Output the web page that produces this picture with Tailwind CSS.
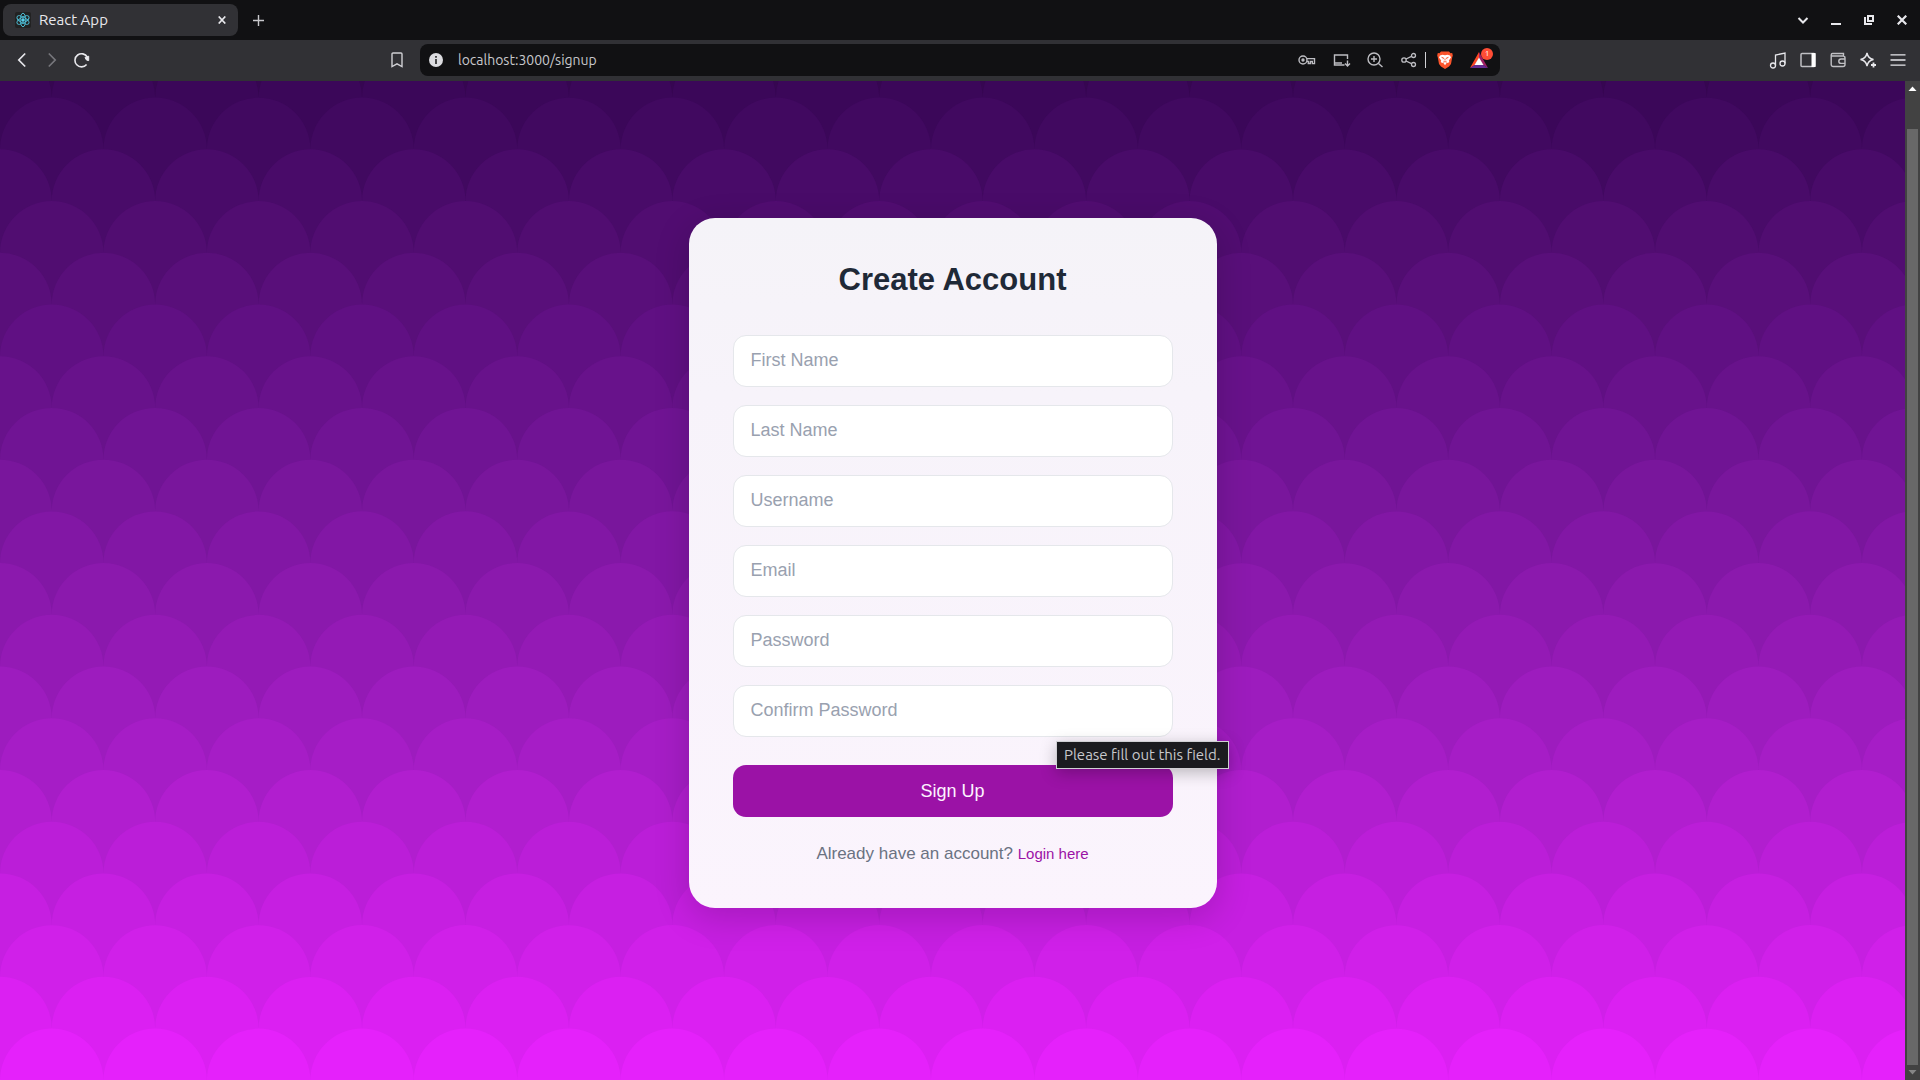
<!DOCTYPE html>
<html lang="en">
<head>
<meta charset="utf-8">
<title>React App</title>
<script src="https://cdn.jsdelivr.net/npm/@tailwindcss/browser@4"></script>
</head>
<body class="flex h-screen flex-col overflow-hidden bg-[#111113] font-['Ubuntu','Noto_Sans',sans-serif]">
<header class="shrink-0 text-[#e8e8ec]">
  <div class="flex h-10 items-center justify-between pr-[10px]">
    <div class="flex items-center">
      <div class="ml-[3px] flex h-8 w-[235px] items-center rounded-lg bg-[#313135] pr-2 pl-3">
        <svg class="size-4 rounded-xs bg-[#222]" viewBox="-13 -13 26 26" fill="none" stroke="#4fc3dc" stroke-width="1.5"><ellipse ry="11" rx="4.5"/><ellipse ry="11" rx="4.5" transform="rotate(60)"/><ellipse ry="11" rx="4.5" transform="rotate(120)"/><circle r="2.2" fill="#61dafb"/></svg>
        <span class="ml-2 flex-1 text-[15px]">React App</span>
        <button aria-label="Close tab" class="grid size-4 place-items-center"><svg class="size-2" viewBox="0 0 8 8" stroke="currentColor" stroke-width="1.7"><path d="M.7.5l6.600 7M7.300.5l-6.600 7"/></svg></button>
      </div>
      <button aria-label="New tab" class="ml-3 grid size-4 place-items-center"><svg class="size-[11px]" viewBox="0 0 11 11" stroke="#c8c8cc" stroke-width="1.4"><path d="M5.500 0v11M0 5.500h11"/></svg></button>
    </div>
    <div class="flex items-center gap-[17px]">
      <button aria-label="Search tabs" class="grid size-4 place-items-center"><svg class="size-3" viewBox="0 0 12 12" fill="none" stroke="currentColor" stroke-width="2"><path d="M1.500 4L6 8.500L10.500 4"/></svg></button>
      <button aria-label="Minimize" class="grid size-4 place-items-center"><svg class="size-[10px]" viewBox="0 0 10 10" fill="currentColor"><path d="M0 8h10v2H0z"/></svg></button>
      <button aria-label="Restore" class="grid size-4 place-items-center"><svg class="size-[10px]" viewBox="0 0 10 10" fill="none" stroke="currentColor" stroke-width="2"><path d="M4 1h5v5H4zM1 2v7h7"/></svg></button>
      <button aria-label="Close" class="grid size-4 place-items-center"><svg class="size-[10px]" viewBox="0 0 10 10" stroke="currentColor" stroke-width="2.2"><path d="M.7.7l8.600 8.600M9.300.7L.7 9.300"/></svg></button>
    </div>
  </div>
  <div class="grid h-[41px] grid-cols-[1fr_minmax(0,1080px)_1fr] items-center bg-[#313135] pb-px">
    <div class="flex items-center justify-between pr-[13px] pl-[10px]">
      <div class="flex items-center gap-2">
        <button aria-label="Back" class="grid size-6 place-items-center"><svg class="h-4 w-3" viewBox="0 0 12 16" fill="none" stroke="currentColor" stroke-width="1.7"><path d="M9.200 1.500L2.800 8l6.400 6.500"/></svg></button>
        <button aria-label="Forward" class="grid size-5 place-items-center text-[#77777c]"><svg class="h-4 w-3" viewBox="0 0 12 16" fill="none" stroke="currentColor" stroke-width="1.7"><path d="M2.800 1.500L9.200 8l-6.400 6.500"/></svg></button>
        <button aria-label="Reload" class="grid size-6 place-items-center"><svg class="size-4" viewBox="0 0 16 16" fill="none" stroke="currentColor" stroke-width="1.6"><path d="M12.600 12.600A6.600 6.600 0 1 1 13.300 5"/><path d="M11 5.500l3.700-1.300v4.400q-2.500.5-3.700-3.100z" fill="currentColor" stroke-width="1"/></svg></button>
      </div>
      <button aria-label="Bookmark" class="grid size-5 place-items-center"><svg class="h-4 w-3" viewBox="0 0 12 16" fill="none" stroke="#d0d0d4" stroke-width="1.4"><path d="M1 2a1 1 0 0 1 1-1h8a1 1 0 0 1 1 1v12.500L6 11.800 1 14.500z"/></svg></button>
    </div>
    <div class="flex h-8 items-center rounded-lg bg-[#111113] pr-[7px] pl-2">
      <svg class="h-[14px] w-4" viewBox="0 0 16 14"><circle cx="8" cy="7" r="7" fill="#dcdce0"/><path d="M7.200 3h1.600v1.700H7.200zM7.200 6h1.600v5H7.200z" fill="#222"/></svg>
      <input aria-label="Address" value="localhost:3000/signup" class="ml-[14px] min-w-0 flex-1 bg-transparent text-sm text-[#c8c8cc] outline-none">
      <div class="flex items-center gap-[14px] text-[#bdbdc2]">
        <svg class="h-4 w-5" viewBox="0 0 20 16" fill="none" stroke="currentColor" stroke-width="1.400"><circle cx="6" cy="8" r="4"/><circle cx="6" cy="8" r="1" fill="currentColor"/><path d="M9.700 6.600H17.500v5h-2.200V9.500h-2v2h-2V9.400H9.800"/></svg>
        <svg class="h-4 w-5" viewBox="0 0 20 16" fill="none" stroke="currentColor" stroke-width="1.400"><path d="M16.500 7V3h-13v10h10M4 11h7M16.500 8.500v5M14 11.500l2.500 2.500 2.500-2.500"/></svg>
        <svg class="size-5" viewBox="0 0 20 20" fill="none" stroke="currentColor" stroke-width="1.400"><circle cx="9" cy="9" r="6"/><path d="M9 6v6M6 9h6M13.500 13.500L17.500 17"/></svg>
        <svg class="h-4 w-5" viewBox="0 0 20 16" fill="none" stroke="currentColor" stroke-width="1.300"><circle cx="5" cy="8" r="2.200"/><circle cx="14.500" cy="3.500" r="2"/><circle cx="14.500" cy="12.500" r="2"/><path d="M7 7l5.500-2.700M7 9l5.500 2.700"/></svg>
      </div>
      <div class="ml-[6px] h-4 w-px bg-[#d0d0d4]"></div>
      <svg class="ml-[11px] h-[18px] w-4" viewBox="0 0 16 18"><path d="M4 .5h8l1.500 1.700 1.700-.2.600 2.500-.6 2L14 13l-2 2.500L8 18l-4-2.500L2 13 .8 6.500l-.6-2L.8 2l1.700.2z" fill="#fb542b"/><path d="M3 4.500l2.500-.8L8 4.300l2.500-.6 2.500.8 1 2-2.200 3 .5 1.500-1.500 1-1.600-.8L8 13l-1.200-1.800-1.600.8-1.500-1 .5-1.500L2 6.500z" fill="#fff"/><path d="M6.200 11.800L8 11l1.800.8L8 14.300z" fill="#fff"/><path d="M4.500 6.300l2 .6-.5 1.300M11.500 6.300l-2 .6.5 1.300M8 7.500v2M6.500 10.300L8 11l1.500-.7" stroke="#fb542b" stroke-width=".9" fill="none"/></svg>
      <button aria-label="Rewards, 1 notification" class="relative ml-4 h-6 w-6"><svg class="h-6 w-[22px]" viewBox="0 0 22 24"><path d="M10 4L1 20l5-3 4-7z" fill="#ff4724"/><path d="M10 4l9 16-5-3-4-7z" fill="#9e1f63"/><path d="M1 20h18l-4.500-3h-9z" fill="#662d91"/><path d="M10 9.500l4.500 7.500h-9z" fill="#fff"/></svg><span class="absolute top-0 right-0 grid size-3 place-items-center rounded-full bg-[#ff4d35] text-[8px] leading-none text-white">1</span></button>
    </div>
    <div class="flex items-center justify-end gap-[10px] pr-3">
      <svg class="size-5" viewBox="0 0 20 20" fill="none" stroke="currentColor" stroke-width="1.300"><circle cx="5" cy="15.500" r="2.500"/><circle cx="14.500" cy="13.500" r="2.500"/><path d="M7.500 15.500V5L17 3v10.500"/></svg>
      <svg class="size-5" viewBox="0 0 20 20" fill="none" stroke="#c0c0c4" stroke-width="1.500"><rect x="3" y="3.500" width="14" height="13" rx="1"/><path d="M13.500 3h4v14h-4z" fill="#fff" stroke="none"/></svg>
      <svg class="size-5" viewBox="0 0 20 20" fill="none" stroke="#c0c0c4" stroke-width="1.400"><path d="M3.200 5v9.500a2 2 0 0 0 2 2H15a2 2 0 0 0 2-2V8a2 2 0 0 0-2-2H4.500a1 1 0 0 1 0-2.500H15.500V6M17 9h-4a2.200 2.200 0 0 0 0 4.400h4"/></svg>
      <svg class="size-5" viewBox="0 0 20 20" fill="none" stroke="currentColor" stroke-width="1.400"><path d="M9 3q1 5.500 6.500 6.500Q10 10.500 9 16 8 10.500 2.500 9.500 8 8.500 9 3z"/><path d="M15.500 12.500v5M13 15h5" stroke-width="1.800"/></svg>
      <button aria-label="Menu" class="grid size-5 place-items-center"><svg class="h-3 w-4" viewBox="0 0 16 12" stroke="currentColor" stroke-width="1.300"><path d="M.5.8h15M.5 6h15M.5 11.200h15"/></svg></button>
    </div>
  </div>
</header>

<div class="flex min-h-0 flex-1">
  <main class="relative flex min-w-0 flex-1 items-start justify-center overflow-hidden bg-[#360651] pt-[137px] font-['Liberation_Sans',sans-serif]">
    <svg id="scales" class="absolute inset-0 h-full w-full" aria-hidden="true"></svg>
    <form class="relative flex w-[528px] flex-col rounded-[26px] bg-linear-to-b from-[#f5f3f8] via-[#f7f3fa] via-25% to-[#fbf4fd] px-11 py-[41px] shadow-[0_9px_35px_rgba(0,0,0,0.17)]">
      <h1 class="mb-[34px] text-center text-[31px] leading-[42px] font-bold text-[#1f2937]">Create Account</h1>
      <div class="flex flex-col gap-[18px] text-[18px]">
        <input aria-label="First Name" placeholder="First Name" required class="h-[52px] rounded-[13px] border border-gray-200 bg-white px-[17px] pb-px placeholder:text-gray-400">
        <input aria-label="Last Name" placeholder="Last Name" required class="h-[52px] rounded-[13px] border border-gray-200 bg-white px-[17px] pb-px placeholder:text-gray-400">
        <input aria-label="Username" placeholder="Username" required class="h-[52px] rounded-[13px] border border-gray-200 bg-white px-[17px] pb-px placeholder:text-gray-400">
        <input aria-label="Email" type="email" placeholder="Email" required class="h-[52px] rounded-[13px] border border-gray-200 bg-white px-[17px] pb-px placeholder:text-gray-400">
        <input aria-label="Password" type="password" placeholder="Password" required class="h-[52px] rounded-[13px] border border-gray-200 bg-white px-[17px] pb-px placeholder:text-gray-400">
        <div class="relative flex flex-col">
          <input aria-label="Confirm Password" type="password" placeholder="Confirm Password" required class="h-[52px] rounded-[13px] border border-gray-200 bg-white px-[17px] pb-px placeholder:text-gray-400">
          <div role="tooltip" class="absolute top-full -right-14 z-10 mt-1 flex h-7 items-center border border-[#d0d0d4] bg-[#1b1b1f] px-[7px] font-['Ubuntu','Noto_Sans',sans-serif] text-[15px] whitespace-nowrap text-[#c8c8cc] shadow-[0_4px_16px_rgba(0,0,0,0.25)]">Please fill out this field.</div>
        </div>
      </div>
      <button type="submit" class="mt-7 h-[52px] rounded-[13px] bg-[#9b12a6] text-[18px] text-[#fdf4ff]">Sign Up</button>
      <p class="mt-[23px] text-center text-[17px] leading-[27px] text-gray-500">Already have an account? <a href="/login" class="text-[15px] text-[#9b12a6]">Login here</a></p>
    </form>
  </main>
  <div class="flex w-[15px] flex-col items-center bg-[#424242]" aria-hidden="true">
    <svg class="h-12 w-[15px] shrink-0" viewBox="0 0 15 48"><path d="M7.500 5.500l4 4.500h-8z" fill="#fff"/></svg>
    <div class="w-[11px] flex-1 bg-[#686868]"></div>
    <svg class="h-[15px] w-[15px] shrink-0" viewBox="0 0 15 15"><path d="M3.500 5h8l-4 4.500z" fill="#868686"/></svg>
  </div>
</div>
<script>
  // Overlapping scales: each row is half a scale lower, lighter and shifted sideways.
  const svg = document.getElementById('scales');
  const stops = [[-1, 59, 7, 89], [0, 65, 9, 96], [6, 112, 20, 148], [12, 166, 29, 198], [18, 229, 33, 251]];
  const colour = (row) => {
    const i = Math.max(1, stops.findIndex((s) => s[0] >= row));
    const [a, b] = [stops[i - 1], stops[i]];
    const t = (row - a[0]) / (b[0] - a[0]);
    return 'rgb(' + [1, 2, 3].map((k) => Math.round(a[k] + (b[k] - a[k]) * t)).join() + ')';
  };
  const r = 51.72;
  for (let row = -1; row <= 18; row++) {
    const top = 16.6 + row * r;
    let d = '';
    for (let cx = row % 2 ? 0 : r; cx < 4000; cx += 2 * r) {
      d += `M${cx - r} ${top + r}a${r} ${r} 0 0 1 ${2 * r} 0v${r}h${-2 * r}z`;
    }
    const path = document.createElementNS('http://www.w3.org/2000/svg', 'path');
    path.setAttribute('d', d);
    path.setAttribute('fill', colour(row));
    svg.append(path);
  }
</script>
</body>
</html>
